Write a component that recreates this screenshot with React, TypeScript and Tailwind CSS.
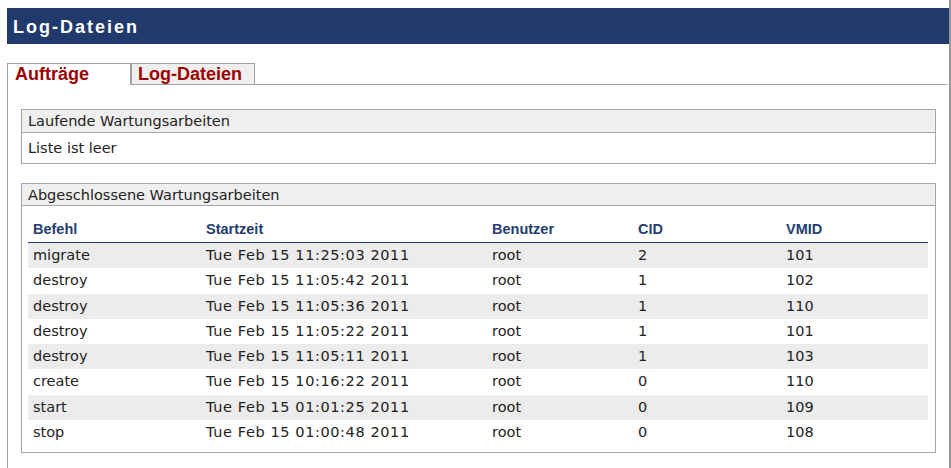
import React from 'react'

const rows = [
  ['migrate', 'Tue Feb 15 11:25:03 2011', 'root', '2', '101'],
  ['destroy', 'Tue Feb 15 11:05:42 2011', 'root', '1', '102'],
  ['destroy', 'Tue Feb 15 11:05:36 2011', 'root', '1', '110'],
  ['destroy', 'Tue Feb 15 11:05:22 2011', 'root', '1', '101'],
  ['destroy', 'Tue Feb 15 11:05:11 2011', 'root', '1', '103'],
  ['create', 'Tue Feb 15 10:16:22 2011', 'root', '0', '110'],
  ['start', 'Tue Feb 15 01:01:25 2011', 'root', '0', '109'],
  ['stop', 'Tue Feb 15 01:00:48 2011', 'root', '0', '108'],
]

const cols = 'grid grid-cols-[173px_286px_146px_148px_1fr]'

export default function App() {
  return (
    <div className="flex w-[951px] h-[468px] bg-white overflow-hidden font-['DejaVu_Sans',sans-serif] text-[14.5px] text-[#222]">
      <div className="w-[949px] pl-[7px] pt-[8px] flex flex-col">
        {/* Title bar */}
        <div className="h-[36px] bg-[#213a6c] pl-[6px] pt-[1px] leading-[36px] text-white text-[18px] font-bold tracking-[2px] font-['Liberation_Sans',Arial,sans-serif]">
          Log-Dateien
        </div>

        {/* Tabs */}
        <div className="mt-[19px] flex items-end font-['Liberation_Sans',Arial,sans-serif] text-[18px] font-bold text-[#9c0000]">
          <div className="relative z-10 -mb-px w-[124px] h-[22px] border border-b-0 border-[#a0a0a0] bg-white pl-[7px] leading-[20px]">
            Aufträge
          </div>
          <div className="w-[124px] h-[21px] border border-b-0 border-[#a0a0a0] bg-[#efefef] pl-[6px] leading-[20px]">
            Log-Dateien
          </div>
        </div>

        {/* Panel */}
        <div className="flex-1 mr-[2px] border-l border-t border-[#a0a0a0] pl-[13px] pr-[11px] pt-[24px]">
          <div className="border border-[#a6a6a6]">
            <div className="h-[23px] bg-[#efefef] border-b border-[#a6a6a6] pl-[6px] leading-[23px]">
              Laufende Wartungsarbeiten
            </div>
            <div className="h-[30px] pl-[6px] leading-[30px]">Liste ist leer</div>
          </div>

          <div className="mt-[19px] border border-[#a6a6a6] pb-[7px]">
            <div className="h-[22px] bg-[#efefef] border-b border-[#a6a6a6] pl-[6px] leading-[22px]">
              Abgeschlossene Wartungsarbeiten
            </div>
            <div className="pl-[6px] pr-[7px]">
              <div className={`${cols} h-[37px] items-end pb-[4px] border-b border-[#213a6c] font-['Liberation_Sans',Arial,sans-serif] font-bold text-[14.5px] leading-[17px] text-[#233d6e]`}>
                <div className="pl-[5px]">Befehl</div>
                <div className="pl-[5px]">Startzeit</div>
                <div className="pl-[5px]">Benutzer</div>
                <div className="pl-[5px]">CID</div>
                <div className="pl-[5px]">VMID</div>
              </div>
              {rows.map((r, i) => (
                <div
                  key={i}
                  className={`${cols} h-[25.3px] leading-[25.3px] ${i % 2 === 0 ? 'bg-[#ececec]' : 'bg-white'}`}
                >
                  <div className="pl-[5px] whitespace-nowrap">{r[0]}</div>
                  <div className="pl-[5px] whitespace-nowrap tracking-[0.6px]">{r[1]}</div>
                  <div className="pl-[5px] whitespace-nowrap">{r[2]}</div>
                  <div className="pl-[5px] whitespace-nowrap">{r[3]}</div>
                  <div className="pl-[5px] whitespace-nowrap">{r[4]}</div>
                </div>
              ))}
            </div>
          </div>
        </div>
      </div>
      <div className="w-[2px] bg-[#999999]" />
    </div>
  )
}
